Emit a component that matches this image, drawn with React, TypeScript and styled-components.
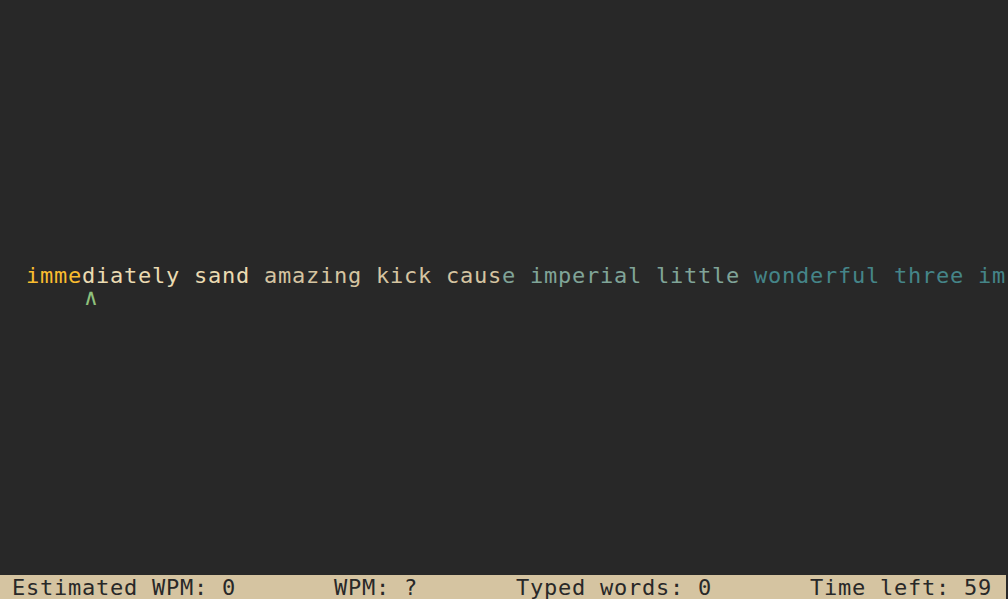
import React from "react";
import styled, { createGlobalStyle } from "styled-components";

const Global = createGlobalStyle`
  html, body { margin: 0; padding: 0; background: #282828; }
  body { overflow: hidden; }
`;

const Screen = styled.div`
  width: 1008px;
  height: 599px;
  background: #282828;
  display: flex;
  flex-direction: column;
  overflow: hidden;
  font-family: "DejaVu Sans Mono", "Liberation Mono", monospace;
  font-size: 22px;
  letter-spacing: 0.756px;
  line-height: 24px;
  white-space: pre;
`;

const Main = styled.div`
  flex: 1;
  display: flex;
  flex-direction: column;
  padding-top: 264px;
`;

const Row = styled.div<{ $indent: number }>`
  height: 24px;
  padding-left: ${(p) => p.$indent}px;
`;

const Seg = styled.span<{ $color: string }>`
  color: ${(p) => p.$color};
`;

const Caret = styled.div`
  color: #8ec07c;
  font-size: 23px;
  line-height: 9px;
  padding-top: 5px;
`;

const StatusBar = styled.div`
  width: 1006px;
  height: 24px;
  flex: none;
  background: #d5c4a1;
  color: #282828;
  padding-left: 12px;
  box-sizing: border-box;
  line-height: 25px;
`;

const segments: { text: string; color: string }[] = [
  { text: "imme", color: "#fabd2f" },
  { text: "diately sand ", color: "#ebdbb2" },
  { text: "amazing kick caus", color: "#d5c4a1" },
  { text: "e imperial little ", color: "#80a498" },
  { text: "wonderful three im", color: "#458588" },
];

export default function App() {
  return (
    <>
      <Global />
      <Screen>
        <Main>
          <Row $indent={26}>
            {segments.map((s, i) => (
              <Seg key={i} $color={s.color}>
                {s.text}
              </Seg>
            ))}
          </Row>
          <Row $indent={84}>
            <Caret>∧</Caret>
          </Row>
        </Main>
        <StatusBar>
          {"Estimated WPM: 0       WPM: ?       Typed words: 0       Time left: 59"}
        </StatusBar>
      </Screen>
    </>
  );
}
